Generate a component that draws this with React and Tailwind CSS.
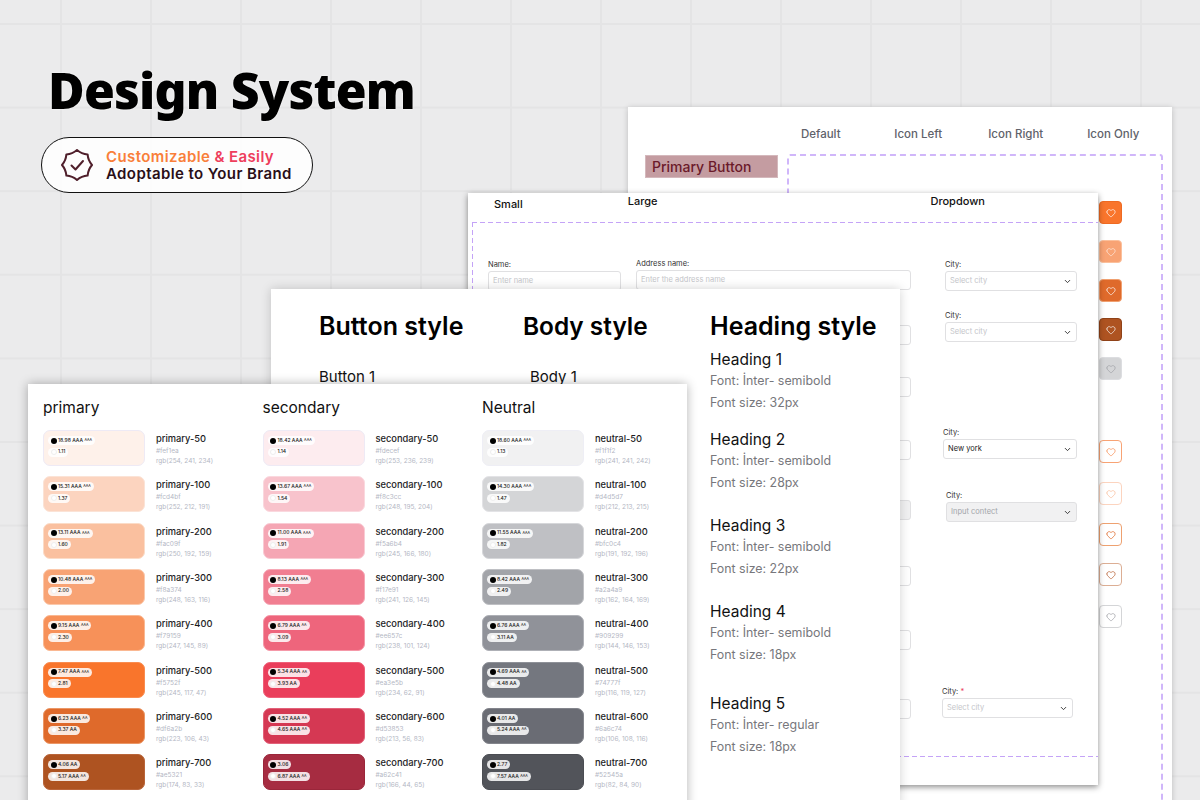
import React from 'react';
import { Heart, ChevronDown } from 'lucide-react';

const palettes = [
    {
        title: 'primary',
        rows: [
            { name: 'primary-50', hex: '#fef1ea', rgb: 'rgb(254, 241, 234)', bg: 'bg-[#fef1ea] border-[#eeeaf5]', a: '18.98 AAA', as: 'AAA', b: '1.11' },
            { name: 'primary-100', hex: '#fcd4bf', rgb: 'rgb(252, 212, 191)', bg: 'bg-[#fcd4bf] border-[#fbe3d6]', a: '15.31 AAA', as: 'AAA', b: '1.37' },
            { name: 'primary-200', hex: '#fac09f', rgb: 'rgb(250, 192, 159)', bg: 'bg-[#fac09f] border-[#fbdcc8]', a: '13.11 AAA', as: 'AAA', b: '1.60' },
            { name: 'primary-300', hex: '#f8a374', rgb: 'rgb(248, 163, 116)', bg: 'bg-[#f8a374] border-[#fbc9ac]', a: '10.48 AAA', as: 'AAA', b: '2.00' },
            { name: 'primary-400', hex: '#f79159', rgb: 'rgb(247, 145, 89)', bg: 'bg-[#f79159] border-[#fab892]', a: '9.15 AAA', as: 'AAA', b: '2.30' },
            { name: 'primary-500', hex: '#f5752f', rgb: 'rgb(245, 117, 47)', bg: 'bg-[#f9752c] border-[#f98c50]', a: '7.47 AAA', as: 'AAA', b: '2.81' },
            { name: 'primary-600', hex: '#df6a2b', rgb: 'rgb(223, 106, 43)', bg: 'bg-[#df6a2b] border-[#eb9767]', a: '6.23 AAA', as: 'AA', b: '3.37 AA' },
            { name: 'primary-700', hex: '#ae5321', rgb: 'rgb(174, 83, 33)', bg: 'bg-[#ae5321] border-[#b9653a]', a: '4.06 AA', as: '', b: '5.17 AAA', bs: 'AA' },
        ],
    },
    {
        title: 'secondary',
        rows: [
            { name: 'secondary-50', hex: '#fdecef', rgb: 'rgb(253, 236, 239)', bg: 'bg-[#fdecef] border-[#eeeaf5]', a: '18.42 AAA', as: 'AAA', b: '1.14' },
            { name: 'secondary-100', hex: '#f8c3cc', rgb: 'rgb(248, 195, 204)', bg: 'bg-[#f8c3cc] border-[#fad8de]', a: '13.67 AAA', as: 'AAA', b: '1.54' },
            { name: 'secondary-200', hex: '#f5a6b4', rgb: 'rgb(245, 166, 180)', bg: 'bg-[#f5a6b4] border-[#f9cbd4]', a: '11.00 AAA', as: 'AAA', b: '1.91' },
            { name: 'secondary-300', hex: '#f17e91', rgb: 'rgb(241, 126, 145)', bg: 'bg-[#f17e91] border-[#f6a8b6]', a: '8.13 AAA', as: 'AAA', b: '2.58' },
            { name: 'secondary-400', hex: '#ee657c', rgb: 'rgb(238, 101, 124)', bg: 'bg-[#ee657c] border-[#f598a8]', a: '6.79 AAA', as: 'AA', b: '3.09' },
            { name: 'secondary-500', hex: '#ea3e5b', rgb: 'rgb(234, 62, 91)', bg: 'bg-[#ea3e5b] border-[#ef6079]', a: '5.34 AAA', as: 'AA', b: '3.93 AA' },
            { name: 'secondary-600', hex: '#d53853', rgb: 'rgb(213, 56, 83)', bg: 'bg-[#d53853] border-[#e2627a]', a: '4.52 AAA', as: 'AA', b: '4.65 AAA', bs: 'AA' },
            { name: 'secondary-700', hex: '#a62c41', rgb: 'rgb(166, 44, 65)', bg: 'bg-[#a62c41] border-[#9a263a]', a: '3.06', as: '', b: '6.87 AAA', bs: 'AA' },
        ],
    },
    {
        title: 'Neutral',
        rows: [
            { name: 'neutral-50', hex: '#f1f1f2', rgb: 'rgb(241, 241, 242)', bg: 'bg-[#f1f1f2] border-[#eeeef5]', a: '18.60 AAA', as: 'AAA', b: '1.13' },
            { name: 'neutral-100', hex: '#d4d5d7', rgb: 'rgb(212, 213, 215)', bg: 'bg-[#d4d5d7] border-[#e3e3e6]', a: '14.30 AAA', as: 'AAA', b: '1.47' },
            { name: 'neutral-200', hex: '#bfc0c4', rgb: 'rgb(191, 192, 196)', bg: 'bg-[#bfc0c4] border-[#d6d7da]', a: '11.55 AAA', as: 'AAA', b: '1.82' },
            { name: 'neutral-300', hex: '#a2a4a9', rgb: 'rgb(162, 164, 169)', bg: 'bg-[#a2a4a9] border-[#bfc0c4]', a: '8.42 AAA', as: 'AAA', b: '2.49' },
            { name: 'neutral-400', hex: '#909299', rgb: 'rgb(144, 146, 153)', bg: 'bg-[#909299] border-[#aeb0b6]', a: '6.76 AAA', as: 'AA', b: '3.11 AA' },
            { name: 'neutral-500', hex: '#74777f', rgb: 'rgb(116, 119, 127)', bg: 'bg-[#74777f] border-[#8e9198]', a: '4.69 AAA', as: 'AA', b: '4.48 AA' },
            { name: 'neutral-600', hex: '#6a6c74', rgb: 'rgb(106, 108, 116)', bg: 'bg-[#6a6c74] border-[#83858c]', a: '4.01 AA', as: '', b: '5.24 AAA', bs: 'AA' },
            { name: 'neutral-700', hex: '#52545a', rgb: 'rgb(82, 84, 90)', bg: 'bg-[#52545a] border-[#4b4d53]', a: '2.77', as: '', b: '7.57 AAA', bs: 'AAA' },
        ],
    },
];

const headings = [
    { title: 'Heading 1', font: 'Font: İnter- semibold', size: 'Font size: 32px', gap: 'mt-[8px]' },
    { title: 'Heading 2', font: 'Font: İnter- semibold', size: 'Font size: 28px', gap: 'mt-[15px]' },
    { title: 'Heading 3', font: 'Font: İnter- semibold', size: 'Font size: 22px', gap: 'mt-[21px]' },
    { title: 'Heading 4', font: 'Font: İnter- semibold', size: 'Font size: 18px', gap: 'mt-[21px]' },
    { title: 'Heading 5', font: 'Font: İnter- regular', size: 'Font size: 18px', gap: 'mt-[27px]' },
];

const solidButtons = [
    { cls: 'bg-[#f9752c] border-[#ee6a22] text-white/90', gap: 'mt-[94px]' },
    { cls: 'bg-[#f8a374] border-[#fbc09c] text-white/70', gap: 'mt-[16px]' },
    { cls: 'bg-[#df6a2b] border-[#f0a070] text-white/90', gap: 'mt-[16px]' },
    { cls: 'bg-[#ae5321] border-[#8f4218] text-white/90', gap: 'mt-[16px]' },
    { cls: 'bg-[#d4d5d7] border-[#dcdde0] text-[#a2a4a9]', gap: 'mt-[16px]' },
];

const outlineButtons = [
    { cls: 'border-[#f8a374] text-[#f79159]', gap: 'mt-[60px]' },
    { cls: 'border-[#fcd4bf] text-[#fac09f]', gap: 'mt-[19px]' },
    { cls: 'border-[#eea170] text-[#df6a2b]', gap: 'mt-[18px]' },
    { cls: 'border-[#dcae94] text-[#b9653a]', gap: 'mt-[17px]' },
    { cls: 'border-[#d4d5d7] text-[#a2a4a9]', gap: 'mt-[19px]' },
];

const largeInputs = ['mt-[35px]', 'mt-[32px]', 'mt-[43px]', 'mt-[40px]', 'mt-[46px]', 'mt-[44px]', 'mt-[49px]'];

const badgePath = (() => {
    const pts = [];
    for (let i = 0; i < 8; i++) {
        const a = (i * Math.PI) / 4 - Math.PI / 2;
        const m = a + Math.PI / 8;
        pts.push([16 + 15 * Math.cos(a), 16 + 15 * Math.sin(a), 16 + 12 * Math.cos(m), 16 + 12 * Math.sin(m)]);
    }
    let d = `M${pts[0][0].toFixed(2)} ${pts[0][1].toFixed(2)}`;
    pts.forEach((p, i) => {
        const n = pts[(i + 1) % 8];
        d += ` Q${p[2].toFixed(2)} ${p[3].toFixed(2)} ${n[0].toFixed(2)} ${n[1].toFixed(2)}`;
    });
    return d + 'Z';
})();

function Swatch({ row }) {
    return (
        <div className="flex gap-[11px] h-[36px]">
            <div className={`w-[102px] h-[36px] shrink-0 rounded-[7px] border ${row.bg} pl-[4px] pt-[5px] flex flex-col gap-[2.5px]`}>
                <div className="flex items-center h-[9px] rounded-full bg-white/85 pl-[2.5px] pr-[3px] gap-[1.5px] w-fit text-[5px] font-medium text-[#222]">
                    <span className="w-[6px] h-[6px] rounded-full bg-black" />
                    <span>{row.a}</span>
                    {row.as && <span className="text-[3.5px]">{row.as}</span>}
                </div>
                <div className="flex items-center h-[9px] rounded-full bg-white/85 pl-[2.5px] pr-[3px] gap-[1.5px] w-fit text-[5px] font-medium text-[#222]">
                    <span className="w-[6px] h-[6px] rounded-full bg-white border border-[#eeeeee]" />
                    <span>{row.b}</span>
                    {row.bs && <span className="text-[3.5px]">{row.bs}</span>}
                </div>
            </div>
            <div className="flex flex-col">
                <div className="text-[9.3px] leading-[14px] font-medium text-[#1c1c1e] mt-[2px]">{row.name}</div>
                <div className="text-[6.5px] leading-[10px] text-[#b4b7c4]">{row.hex}</div>
                <div className="text-[6.5px] leading-[10px] text-[#b4b7c4]">{row.rgb}</div>
            </div>
        </div>
    );
}

function IconButton({ cls, gap }) {
    return (
        <div className={`w-[23px] h-[23px] rounded-[4px] border flex items-center justify-center ${cls} ${gap}`}>
            <Heart className="w-[10px] h-[10px]" strokeWidth={1.8} />
        </div>
    );
}

function Field({ label, placeholder, wrapper, disabled, value, select, required }) {
    return (
        <div className={wrapper}>
            <div className="text-[7.5px] leading-[10px] text-[#333] h-[10px]">
                {label}
                {required && <span className="text-[#ea3e5b]"> *</span>}
            </div>
            <div className={`mt-[1px] h-[20px] rounded-[3px] border border-[#e0e0e2] flex items-center justify-between px-[4px] text-[7.5px] ${disabled ? 'bg-[#f1f1f2] text-[#a2a4a9]' : 'bg-white'} ${value ? 'text-[#222]' : disabled ? '' : 'text-[#c4c5c9]'}`}>
                <span>{value || placeholder}</span>
                {select && <ChevronDown className="w-[9px] h-[9px] text-[#333]" strokeWidth={2.5} />}
            </div>
        </div>
    );
}

export default function App() {
    return (
        <div className="relative w-[1200px] h-[800px] overflow-hidden bg-[#ebebec] bg-[linear-gradient(to_right,#e4e4e5_2px,transparent_2px),linear-gradient(to_bottom,#e4e4e5_2px,transparent_2px)] bg-[size:90px_83.6px] bg-[position:60px_23px] font-['Inter',sans-serif]">
            {/* Hero */}
            <div className="pl-[41px] pt-[56px] flex flex-col">
                <h1 className="ml-[7px] text-[50px] leading-[68px] tracking-[-0.8px] font-black text-black font-['Noto_Sans',sans-serif] [text-shadow:0_0_2px_#fff]">
                    Design System
                </h1>
                <div className="mt-[13px] w-[272px] h-[56px] rounded-full border-[1.5px] border-[#111] bg-white/90 flex items-center pl-[19px] gap-[13px]">
                    <svg viewBox="0 0 32 32" className="w-[32px] h-[32px]" fill="none" stroke="#4f1f2b" strokeWidth="2" strokeLinejoin="round" strokeLinecap="round">
                        <path d={badgePath} />
                        <path d="M10.5 16.5l4 4 7.5-8.5" strokeWidth="2" />
                    </svg>
                    <div className="text-[15px] leading-[17px] font-semibold tracking-[0.4px]">
                        <div>
                            <span className="text-[#f97f3a]">Customizable </span>
                            <span className="text-[#ee3e5c]">&amp; Easily</span>
                        </div>
                        <div className="text-[#2a0f18]">Adoptable to Your Brand</div>
                    </div>
                </div>
            </div>

            {/* Button sheet (back) */}
            <div className="absolute left-[628px] top-[107px] w-[544px] h-[700px] bg-white shadow-[0_1px_6px_rgba(0,0,0,0.2)]">
                <div className="grid grid-cols-[repeat(4,97.5px)] ml-[144px] pt-[20px] text-[11.5px] leading-[15px] font-medium text-[#60626a] text-center">
                    <span>Default</span>
                    <span>Icon Left</span>
                    <span>Icon Right</span>
                    <span>Icon Only</span>
                </div>
                <div className="flex mt-[12px] ml-[17px]">
                    <div className="w-[133px] h-[23px] mt-[1px] bg-[#c49ca1] border border-[#d4b8bc] pl-[6px] text-[14px] leading-[22px] font-medium text-[#6b1a2a]">
                        Primary Button
                    </div>
                    <div className="ml-[9px] w-[376px] h-[700px] border-2 border-dashed border-[#d0b6fa] rounded-[3px]" />
                </div>
                <div className="absolute left-[471px] top-0 flex flex-col">
                    {solidButtons.map((b, i) => <IconButton key={i} cls={b.cls} gap={b.gap} />)}
                    {outlineButtons.map((b, i) => <IconButton key={i} cls={`bg-white ${b.cls}`} gap={b.gap} />)}
                </div>
            </div>

            {/* Input sheet */}
            <div className="absolute left-[468px] top-[193px] w-[630px] h-[592px] bg-white shadow-[0_2px_6px_rgba(0,0,0,0.45)]">
                <div className="h-[29px] text-[11px] font-medium text-[#111]">
                    <div className="flex">
                        <span className="ml-[26px] mt-[3px]">Small</span>
                        <span className="ml-[105px]">Large</span>
                        <span className="ml-[273px]">Dropdown</span>
                    </div>
                </div>
                <div className="ml-[4px] h-[535px] flex pl-[16px] bg-no-repeat bg-[repeating-linear-gradient(to_right,#c4a3f7_0_5px,transparent_5px_8px),repeating-linear-gradient(to_right,#c4a3f7_0_5px,transparent_5px_8px),repeating-linear-gradient(to_bottom,#c4a3f7_0_5px,transparent_5px_8px)] bg-[size:100%_1px,100%_1px,1px_100%] bg-[position:0_0,0_100%,0_0]">
                    <div className="w-[148px]">
                        <Field label="Name:" placeholder="Enter name" wrapper="w-[133px] mt-[38px]" />
                    </div>
                    <div className="w-[275px] mt-[37px]">
                        <Field label="Address name:" placeholder="Enter the address name" />
                        {largeInputs.map((gap, i) => (
                            <div key={i} className={`${gap} h-[20px] rounded-[3px] border border-[#e0e0e2] ${i === 3 ? 'bg-[#f1f1f2]' : 'bg-white'}`} />
                        ))}
                    </div>
                    <div className="ml-[34px] w-[132px] mt-[38px]">
                        <Field label="City:" placeholder="Select city" select />
                        <Field label="City:" placeholder="Select city" select wrapper="mt-[20px]" />
                        <Field label="City:" value="New york" select wrapper="mt-[86px] -ml-[2px]" />
                        <Field label="City:" placeholder="Input contect" select disabled wrapper="mt-[32px] ml-[1px]" />
                        <Field label="City:" placeholder="Select city" select required wrapper="mt-[165px] -ml-[3px] w-[131px]" />
                    </div>
                </div>
            </div>

            {/* Typography sheet */}
            <div className="absolute left-[271px] top-[289px] w-[629px] h-[520px] bg-white shadow-[0_0_10px_rgba(0,0,0,0.18)] flex pl-[48px] pt-[22px]">
                <div className="w-[204px]">
                    <div className="text-[25px] leading-[30px] font-semibold text-black">Button style</div>
                    <div className="mt-[26px] text-[15px] leading-[20px] text-[#111]">Button 1</div>
                </div>
                <div className="w-[187px]">
                    <div className="text-[24.4px] leading-[30px] font-semibold text-black">Body style</div>
                    <div className="mt-[26px] ml-[7px] text-[15px] leading-[20px] text-[#111]">Body 1</div>
                </div>
                <div>
                    <div className="text-[25px] leading-[30px] font-semibold text-black">Heading style</div>
                    {headings.map((h) => (
                        <div key={h.title} className={h.gap}>
                            <div className="text-[15.5px] leading-[21px] text-[#111]">{h.title}</div>
                            <div className="text-[12.4px] leading-[22px] text-[#77777c]">{h.font}</div>
                            <div className="text-[12.4px] leading-[22px] text-[#77777c]">{h.size}</div>
                        </div>
                    ))}
                </div>
            </div>

            {/* Colour sheet (front) */}
            <div className="absolute left-[28px] top-[384px] w-[659px] h-[430px] bg-white shadow-[0_0_10px_rgba(0,0,0,0.3)] pl-[15px] pt-[13px] grid grid-cols-[219.5px_219.5px_auto]">
                {palettes.map((p) => (
                    <div key={p.title}>
                        <div className="text-[15.5px] leading-[22px] text-[#111]">{p.title}</div>
                        <div className="mt-[11px] flex flex-col gap-[10.35px]">
                            {p.rows.map((row) => <Swatch key={row.name} row={row} />)}
                        </div>
                    </div>
                ))}
            </div>
        </div>
    );
}
